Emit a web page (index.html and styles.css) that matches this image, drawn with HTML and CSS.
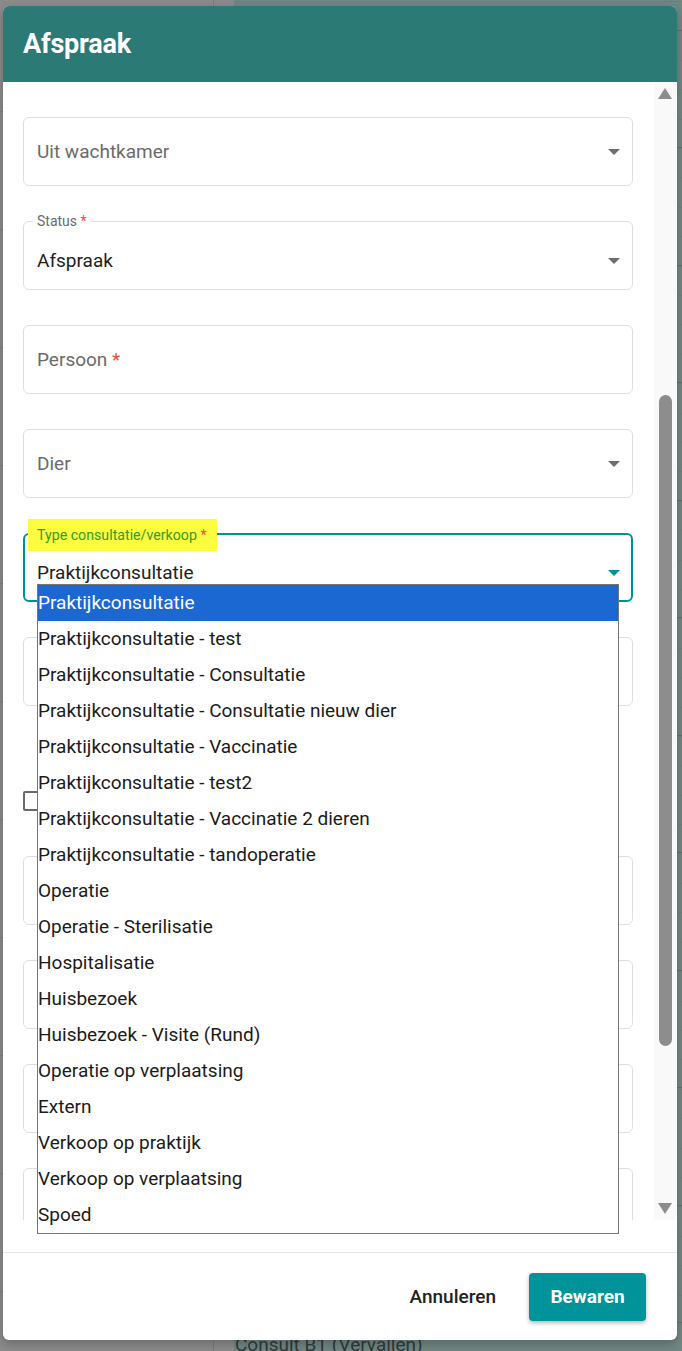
FILE: index.html
```html
<!DOCTYPE html>
<html lang="nl">
<head>
<meta charset="utf-8">
<title>Afspraak</title>
<link rel="stylesheet" href="styles.css">
</head>
<body>
<div class="page">
  <div class="page-side"></div>
  <div class="page-main">
    <div class="bg-row">Consult B1 (Vervallen)</div>
  </div>
</div>

<div class="modal">
  <div class="modal-header"><h1>Afspraak</h1></div>
  <div class="modal-body">
    <div class="content">
      <div class="field">
        <span class="placeholder">Uit wachtkamer</span>
        <span class="arrow"></span>
      </div>
      <div class="field has-label">
        <span class="label">Status <span class="req">*</span></span>
        <span class="value">Afspraak</span>
        <span class="arrow"></span>
      </div>
      <div class="field">
        <span class="placeholder">Persoon <span class="req">*</span></span>
      </div>
      <div class="field">
        <span class="placeholder">Dier</span>
        <span class="arrow"></span>
      </div>
      <div class="field has-label focused">
        <span class="label hl">Type consultatie/verkoop <span class="req">*</span></span>
        <span class="value">Praktijkconsultatie</span>
        <span class="arrow"></span>
      </div>
      <div class="field"></div>
      <div class="check-row"><span class="checkbox"></span></div>
      <div class="field"></div>
      <div class="field"></div>
      <div class="field"></div>
      <div class="field"></div>
    </div>
    <div class="scrolltrack">
      <span class="sb-up"></span>
      <span class="sb-thumb"></span>
      <span class="sb-fill"></span>
      <span class="sb-down"></span>
    </div>
  </div>
  <div class="body-pad"></div>
  <div class="modal-footer">
    <button class="btn-text">Annuleren</button>
    <button class="btn-primary">Bewaren</button>
  </div>

  <ul class="dropdown">
    <li class="selected">Praktijkconsultatie</li>
    <li>Praktijkconsultatie - test</li>
    <li>Praktijkconsultatie - Consultatie</li>
    <li>Praktijkconsultatie - Consultatie nieuw dier</li>
    <li>Praktijkconsultatie - Vaccinatie</li>
    <li>Praktijkconsultatie - test2</li>
    <li>Praktijkconsultatie - Vaccinatie 2 dieren</li>
    <li>Praktijkconsultatie - tandoperatie</li>
    <li>Operatie</li>
    <li>Operatie - Sterilisatie</li>
    <li>Hospitalisatie</li>
    <li>Huisbezoek</li>
    <li>Huisbezoek - Visite (Rund)</li>
    <li>Operatie op verplaatsing</li>
    <li>Extern</li>
    <li>Verkoop op praktijk</li>
    <li>Verkoop op verplaatsing</li>
    <li>Spoed</li>
  </ul>
</div>
</body>
</html>
```
FILE: styles.css
```css
* { box-sizing: border-box; }

html, body {
  margin: 0;
  padding: 0;
}

body {
  width: 682px;
  height: 1351px;
  overflow: hidden;
  position: relative;
  font-family: Roboto, "Liberation Sans", Arial, sans-serif;
  background: #738986;
}

/* background page (under the overlay) */
.page {
  display: grid;
  grid-template-columns: 234px 1fr;
  height: 1351px;
}

.page-side {
  background:
    linear-gradient(to right, transparent 213px, #7b7b7b 213px, #7b7b7b 214px, transparent 214px),
    repeating-linear-gradient(to bottom, transparent 0, transparent 117px, #808080 117px, #808080 118px),
    #8c8c8c;
  background-position: 0 0, 0 -6px, 0 0;
}

.page-main {
  display: flex;
  flex-direction: column;
  justify-content: flex-end;
  background:
    repeating-linear-gradient(to bottom, #5f726f 0, #5f726f 1px, transparent 1px, transparent 117.5px),
    repeating-linear-gradient(to bottom, #6d827f 0, #6d827f 1px, transparent 1px, transparent 29.4px),
    #728885;
  background-position: 0 30px, 0 1px, 0 0;
}

.bg-row {
  padding-left: 1px;
  margin-bottom: -4px;
  font-size: 19px;
  line-height: 20px;
  height: 20px;
  color: #2f3b3a;
  white-space: nowrap;
}

/* modal */
.modal {
  position: absolute;
  left: 3px;
  top: 6px;
  width: 674px;
  height: 1334px;
  background: #fff;
  border-radius: 6px;
  overflow: hidden;
  display: flex;
  flex-direction: column;
  box-shadow: 0 4px 12px rgba(0, 0, 0, 0.25);
}

.modal-header {
  flex: none;
  height: 76px;
  background: #2c7a76;
  display: flex;
  align-items: center;
  padding-left: 20px;
}

.modal-header h1 {
  margin: 0;
  font-size: 27px;
  font-weight: 700;
  color: #fff;
  letter-spacing: -0.2px;
}

.modal-body {
  flex: none;
  height: 1138px;
  display: flex;
}

.content {
  flex: 1;
  padding: 35px 21px 0 20px;
  overflow: hidden;
}

.field {
  position: relative;
  height: 69px;
  margin-bottom: 35px;
  border: 1px solid #dedede;
  border-radius: 6px;
  display: flex;
  align-items: center;
  padding: 0 12px 0 13px;
  font-size: 19px;
}

.field.has-label {
  padding-top: 10px;
}

.field.focused {
  border: 2px solid #00929a;
  padding-left: 12px;
  padding-right: 11px;
}

.placeholder {
  flex: 1;
  color: #6b6b6b;
}

.value {
  flex: 1;
  color: #1e1e1e;
}

.req {
  color: #ec4a3c;
}

.label {
  position: absolute;
  top: -10px;
  left: 9px;
  padding: 0 4px;
  background: #fff;
  font-size: 14px;
  line-height: 18px;
  color: #6b6b6b;
}

.label.hl {
  top: -16px;
  left: 3px;
  padding: 7px 10px 7px 9px;
  background: #fbfd3e;
  color: #3a9a24;
  font-size: 14.2px;
}

.arrow {
  width: 0;
  height: 0;
  border-left: 6px solid transparent;
  border-right: 6px solid transparent;
  border-top: 6px solid #6e6e6e;
}

.focused .arrow {
  border-top-color: #00929a;
}

.check-row {
  height: 80px;
  margin-bottom: 35px;
  padding-top: 50px;
  padding-left: 0;
}

.checkbox {
  display: block;
  width: 20px;
  height: 20px;
  border: 2px solid #6a6a6a;
  border-radius: 2px;
}

/* scrollbar */
.scrolltrack {
  flex: none;
  width: 22px;
  margin-right: 1px;
  background: #f9f9f9;
  display: flex;
  flex-direction: column;
  align-items: center;
}

.sb-up,
.sb-down {
  width: 0;
  height: 0;
  border-left: 7px solid transparent;
  border-right: 7px solid transparent;
}

.sb-up {
  margin-top: 6px;
  border-bottom: 11px solid #8d8d8d;
}

.sb-down {
  margin-bottom: 6px;
  border-top: 11px solid #8d8d8d;
}

.sb-thumb {
  margin-top: 296px;
  width: 13px;
  height: 651px;
  border-radius: 7px;
  background: #8d8d8d;
}

.sb-fill {
  flex: 1;
}

.body-pad {
  flex: none;
  height: 32px;
}

.modal-footer {
  flex: none;
  height: 88px;
  border-top: 1px solid #e6e6e6;
  display: flex;
  justify-content: flex-end;
  align-items: center;
  gap: 17px;
  padding-right: 31px;
}

.btn-text,
.btn-primary {
  font-family: Roboto, "Liberation Sans", Arial, sans-serif;
  font-size: 19px;
  height: 48px;
  border: none;
  border-radius: 4px;
  cursor: pointer;
}

.btn-text {
  background: transparent;
  color: #222;
  font-weight: 500;
  padding: 0 16px;
}

.btn-primary {
  width: 117px;
  background: #00939a;
  color: #fff;
  font-weight: 700;
  box-shadow: 0 2px 4px rgba(0, 0, 0, 0.3);
}

/* native select popup */
.dropdown {
  position: absolute;
  left: 34px;
  top: 578px;
  width: 582px;
  margin: 0;
  padding: 0;
  list-style: none;
  background: #fff;
  border: 1px solid #767676;
}

.dropdown li {
  height: 36px;
  line-height: 36px;
  padding-left: 0;
  font-size: 19px;
  color: #1b1b1b;
  white-space: nowrap;
}

.dropdown li.selected {
  background: #1b68d3;
  color: #fff;
}
```
